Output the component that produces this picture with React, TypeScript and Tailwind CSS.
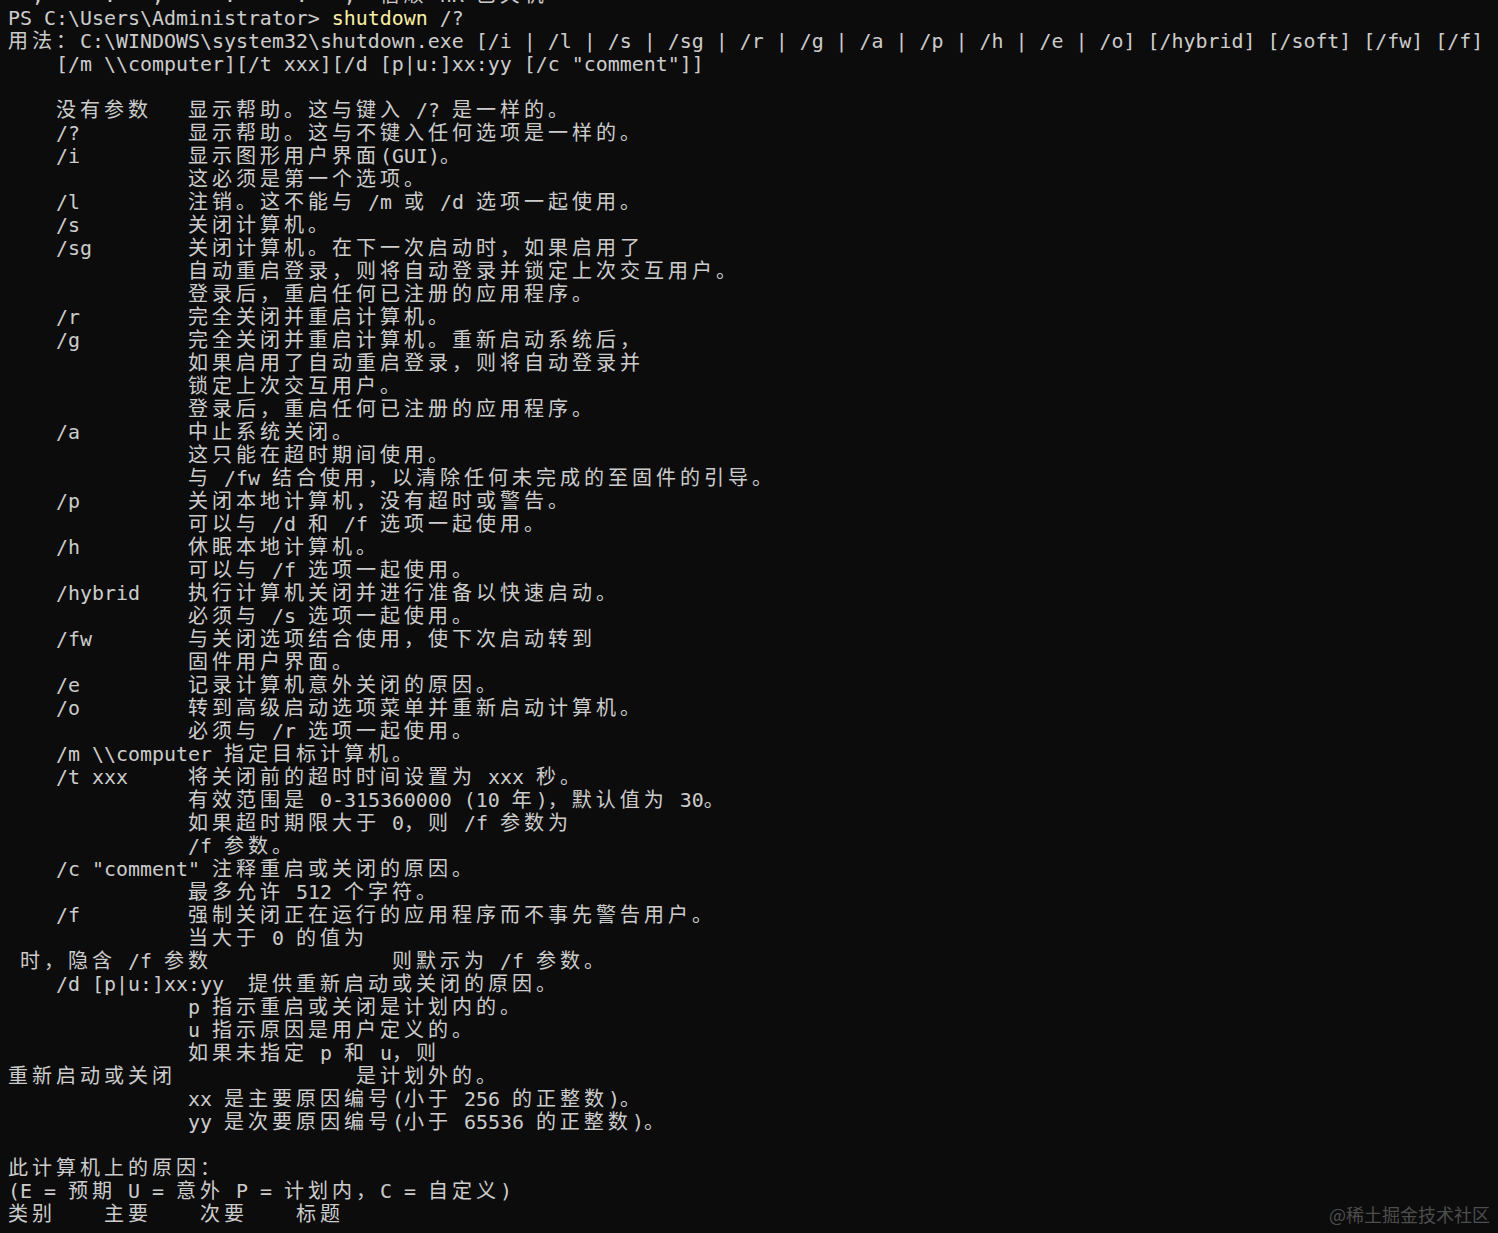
import React from "react";

type Seg = { wide: boolean; text: string };

function isWide(ch: string): boolean {
  const c = ch.codePointAt(0) || 0;
  return c >= 0x2e80;
}

function split(s: string): Seg[] {
  const out: Seg[] = [];
  let cur = "";
  let mode: boolean | null = null;
  for (const ch of s) {
    const w = isWide(ch);
    if (mode === null || mode === w) {
      cur += ch;
      mode = w;
    } else {
      out.push({ wide: mode, text: cur });
      cur = ch;
      mode = w;
    }
  }
  if (cur.length && mode !== null) out.push({ wide: mode, text: cur });
  return out;
}

function Line({ text }: { text: string }) {
  return (
    <>
      {split(text).map((seg, i) =>
        seg.wide ? (
          <span
            key={i}
            className="font-['Noto_Sans_CJK_SC',sans-serif] text-[20px] leading-[12px] tracking-[4px]"
          >
            {seg.text}
          </span>
        ) : (
          <span key={i}>{seg.text}</span>
        )
      )}
    </>
  );
}

const lines: string[] = [
  String.raw`用法：C:\WINDOWS\system32\shutdown.exe [/i | /l | /s | /sg | /r | /g | /a | /p | /h | /e | /o] [/hybrid] [/soft] [/fw] [/f]`,
  String.raw`    [/m \\computer][/t xxx][/d [p|u:]xx:yy [/c "comment"]]`,
  ``,
  `    没有参数   显示帮助。这与键入 /? 是一样的。`,
  `    /?         显示帮助。这与不键入任何选项是一样的。`,
  `    /i         显示图形用户界面(GUI)。`,
  `               这必须是第一个选项。`,
  `    /l         注销。这不能与 /m 或 /d 选项一起使用。`,
  `    /s         关闭计算机。`,
  `    /sg        关闭计算机。在下一次启动时，如果启用了`,
  `               自动重启登录，则将自动登录并锁定上次交互用户。`,
  `               登录后，重启任何已注册的应用程序。`,
  `    /r         完全关闭并重启计算机。`,
  `    /g         完全关闭并重启计算机。重新启动系统后，`,
  `               如果启用了自动重启登录，则将自动登录并`,
  `               锁定上次交互用户。`,
  `               登录后，重启任何已注册的应用程序。`,
  `    /a         中止系统关闭。`,
  `               这只能在超时期间使用。`,
  `               与 /fw 结合使用，以清除任何未完成的至固件的引导。`,
  `    /p         关闭本地计算机，没有超时或警告。`,
  `               可以与 /d 和 /f 选项一起使用。`,
  `    /h         休眠本地计算机。`,
  `               可以与 /f 选项一起使用。`,
  `    /hybrid    执行计算机关闭并进行准备以快速启动。`,
  `               必须与 /s 选项一起使用。`,
  `    /fw        与关闭选项结合使用，使下次启动转到`,
  `               固件用户界面。`,
  `    /e         记录计算机意外关闭的原因。`,
  `    /o         转到高级启动选项菜单并重新启动计算机。`,
  `               必须与 /r 选项一起使用。`,
  String.raw`    /m \\computer 指定目标计算机。`,
  `    /t xxx     将关闭前的超时时间设置为 xxx 秒。`,
  `               有效范围是 0-315360000 (10 年)，默认值为 30。`,
  `               如果超时期限大于 0，则 /f 参数为`,
  `               /f 参数。`,
  `    /c "comment" 注释重启或关闭的原因。`,
  `               最多允许 512 个字符。`,
  `    /f         强制关闭正在运行的应用程序而不事先警告用户。`,
  `               当大于 0 的值为`,
  ` 时，隐含 /f 参数               则默示为 /f 参数。`,
  `    /d [p|u:]xx:yy  提供重新启动或关闭的原因。`,
  `               p 指示重启或关闭是计划内的。`,
  `               u 指示原因是用户定义的。`,
  `               如果未指定 p 和 u，则`,
  `重新启动或关闭               是计划外的。`,
  `               xx 是主要原因编号(小于 256 的正整数)。`,
  `               yy 是次要原因编号(小于 65536 的正整数)。`,
  ``,
  `此计算机上的原因：`,
  `(E = 预期 U = 意外 P = 计划内，C = 自定义)`,
  `类别    主要    次要    标题`,
];

export default function App() {
  return (
    <div className="relative min-h-screen w-full overflow-hidden bg-[#0c0c0c] text-[#cccccc]">
      <div className="flex flex-col pl-[8px] pt-[7px] font-['DejaVu_Sans_Mono','Noto_Sans_CJK_SC',monospace] text-[19.93px] leading-[23px] whitespace-pre">
        <div className="-mt-[23px] h-[23px]">
          <Line text={`  ,  '  .   ,  '  .  '  .   ,  信顺 hR 已关机`} />
        </div>
        <div className="h-[23px]">
          <span>{String.raw`PS C:\Users\Administrator> `}</span>
          <span className="text-[#f9f1a5]">shutdown</span>
          <span> /?</span>
        </div>
        {lines.map((l, i) => (
          <div key={i} className="h-[23px]">
            <Line text={l} />
          </div>
        ))}
      </div>
      <div className="absolute bottom-[7px] right-[8px] font-['Noto_Sans_CJK_SC',sans-serif] text-[18px] leading-[23px] text-[#4d4d4d]">
        @稀土掘金技术社区
      </div>
    </div>
  );
}
